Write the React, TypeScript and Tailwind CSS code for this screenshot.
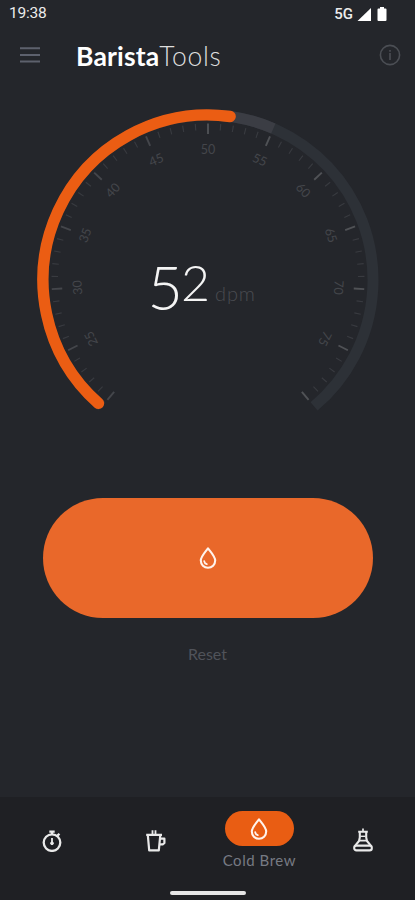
const CX = 208;
const CY = 280;
const RADIUS = 165;
const DEG_PER_UNIT = 280 / 60;

const angleOf = (value: number) => (value - 50) * DEG_PER_UNIT;

const point = (deg: number, r: number) => {
  const rad = (deg * Math.PI) / 180;
  return [CX + r * Math.sin(rad), CY - r * Math.cos(rad)];
};

const arc = (from: number, to: number) => {
  const [x1, y1] = point(from, RADIUS);
  const [x2, y2] = point(to, RADIUS);
  const large = to - from > 180 ? 1 : 0;
  return `M${x1} ${y1}A${RADIUS} ${RADIUS} 0 ${large} 1 ${x2} ${y2}`;
};

const ticks = Array.from({ length: 61 }, (_, i) => i + 20);
const labels = [25, 30, 35, 40, 45, 50, 55, 60, 65, 70, 75];

const StatusBar = () => (
  <div className="flex h-7 items-center justify-between pl-[9px] pr-7 font-['Roboto'] text-[#ececec]">
    <span className="text-[15.5px] tracking-[-0.2px]">19:38</span>
    <div className="flex items-center">
      <span className="mr-1 text-[15px] font-medium">5G</span>
      <svg width="14" height="13" viewBox="0 0 14 13" className="mr-1.5">
        <path d="M14 0V13H0.5Z" fill="#fff" />
      </svg>
      <svg width="10" height="14" viewBox="0 0 10 14">
        <path d="M3 0H7V1.5H8.5Q9.5 1.5 9.5 2.5V13Q9.5 14 8.5 14H1.5Q.5 14 .5 13V2.5Q.5 1.5 1.5 1.5H3Z" fill="#fff" />
      </svg>
    </div>
  </div>
);

const Header = () => (
  <header className="flex h-[54px] items-center pl-5 pr-[14px]">
    <svg width="20" height="16" viewBox="0 0 20 16" stroke="#5d616d" strokeWidth="2">
      <path d="M0 1.3H20M0 8H20M0 14.4H20" />
    </svg>
    <h1 className="ml-[36px] flex-1 pt-0.5 font-['Lato'] text-[26.5px] leading-none text-white">
      <span className="font-bold tracking-[0.15px]">Barista</span>
      <span className="font-light tracking-[0.7px] text-[#dedede]">Tools</span>
    </h1>
    <svg width="22" height="22" viewBox="0 0 22 22" fill="none" stroke="#4b4e54" strokeWidth="1.6">
      <circle cx="11" cy="11" r="9.6" />
      <path d="M11 9V16M11 6V7.8" />
    </svg>
  </header>
);

const Gauge = () => (
  <svg width="415" height="342" viewBox="0 82 415 342" className="block" fill="none">
    <path d={arc(-140, 140)} stroke="#2d3137" strokeWidth="11" />
    <path d={arc(0, angleOf(55))} stroke="#3b3d44" strokeWidth="11" />
    <path d={arc(-138.4, 7.7)} stroke="#eb5d13" strokeWidth="11.4" strokeLinecap="round" />
    {ticks.map((value) => {
      const major = value % 5 === 0;
      const [x1, y1] = point(angleOf(value), 156.5);
      const [x2, y2] = point(angleOf(value), major ? 146 : 150);
      return (
        <line
          key={value}
          x1={x1}
          y1={y1}
          x2={x2}
          y2={y2}
          stroke={major ? (value < 50 ? '#44464b' : '#505256') : '#393b40'}
          strokeWidth={major ? 1.9 : 1.1}
        />
      );
    })}
    {labels.map((value) => (
      <text
        key={value}
        transform={`rotate(${angleOf(value)} ${CX} ${CY})`}
        x={CX}
        y={153.5}
        textAnchor="middle"
        fill="#44464b"
        className="font-['Lato'] text-[12.5px]"
      >
        {value}
      </text>
    ))}
    <text x="147.5" y="310" fill="#f4f4f4" className="font-['Lato'] font-light">
      <tspan className="text-[61px]">5</tspan>
      <tspan dx="-2" dy="-9" className="text-[50px]">2</tspan>
    </text>
    <text x="215" y="301" fill="#4a4c51" className="font-['Lato'] text-[20px] font-light tracking-[0.9px]">
      dpm
    </text>
  </svg>
);

const DropIcon = () => (
  <svg width="18" height="22" viewBox="0 0 18 22" fill="none" stroke="#fff3ec" strokeWidth="2.1" strokeLinecap="round" strokeLinejoin="round">
    <path d="M9 1.3C6.5 4.8 1.8 9.4 1.8 13.6A7.2 7.2 0 0 0 16.2 13.6C16.2 9.4 11.5 4.8 9 1.3Z" />
    <path d="M5.2 14.2Q5.5 16.5 7.8 17.2" strokeWidth="1.8" />
  </svg>
);

const TimerIcon = () => (
  <svg width="20" height="22" viewBox="0 0 20 22" fill="none" stroke="#e9e9e9" strokeWidth="2.3">
    <circle cx="10" cy="12.6" r="8.3" />
    <path d="M7.3 1.6H12.7M10 1.5V4M15.3 5.7L17.5 3.8" />
    <path d="M10 8V13" strokeWidth="1.8" />
    <circle cx="10" cy="13.3" r="1.4" fill="#e9e9e9" strokeWidth="1" />
  </svg>
);

const CupIcon = () => (
  <svg width="20" height="22" viewBox="0 0 20 22" fill="none" stroke="#e9e9e9" strokeWidth="2.2" strokeLinejoin="round">
    <path d="M0.2 4.8H16M1.8 5L3.2 20.3H12.8L14.3 5" />
    <path d="M14 8.7H18.4V13L17 14.3H13.5" />
    <path d="M6.5 0.3V4M9.5 0.3V4" strokeWidth="1.8" />
  </svg>
);

const FlaskIcon = () => (
  <svg width="20" height="24" viewBox="0 0 20 24" fill="none" stroke="#e9e9e9" strokeWidth="2.1" strokeLinejoin="round">
    <path d="M5.2 3.8H14.8M6.8 4V9.5L6 13L2 17.8M13.2 4V9.5L14 13L18 17.8" />
    <rect x="1.2" y="17.6" width="17.6" height="4.8" rx="2.2" />
    <path d="M6.5 12.6H13.5M10 0.6V3.2" strokeWidth="1.7" />
    <path d="M7.5 8.3H12.5" strokeWidth="1.4" />
  </svg>
);

const BottomNav = () => (
  <nav className="mt-auto flex h-[103px] flex-col bg-[#1f2024]">
    <div className="grid flex-1 grid-cols-4 items-start">
      <button type="button" className="mt-[33px] flex justify-center">
        <TimerIcon />
      </button>
      <button type="button" className="mt-[33px] flex justify-center">
        <CupIcon />
      </button>
      <button type="button" className="mt-[14px] flex flex-col items-center">
        <span className="flex h-[35px] w-[69px] items-center justify-center rounded-full bg-[#e95d13]">
          <DropIcon />
        </span>
        <span className="mt-1 whitespace-nowrap font-['Lato'] text-[15px] leading-5 tracking-[0.55px] text-[#777a83]">
          Cold Brew
        </span>
      </button>
      <button type="button" className="mt-[31px] flex justify-center">
        <FlaskIcon />
      </button>
    </div>
    <div className="mx-auto mb-[5px] h-1 w-[76px] rounded-full bg-[#e6e6e6]" />
  </nav>
);

const App = () => {
  return (
    <div className="flex h-screen w-full flex-col overflow-hidden bg-[#24262b]">
      <StatusBar />
      <Header />
      <Gauge />
      <div className="mt-[74px] flex flex-col items-center">
        <button type="button" className="flex h-[120px] w-[330px] items-center justify-center rounded-full bg-[#e9682a]">
          <DropIcon />
        </button>
        <button type="button" className="mt-[26px] font-['Lato'] text-[16px] leading-5 text-[#50535a]">
          Reset
        </button>
      </div>
      <BottomNav />
    </div>
  );
};

export default App;
